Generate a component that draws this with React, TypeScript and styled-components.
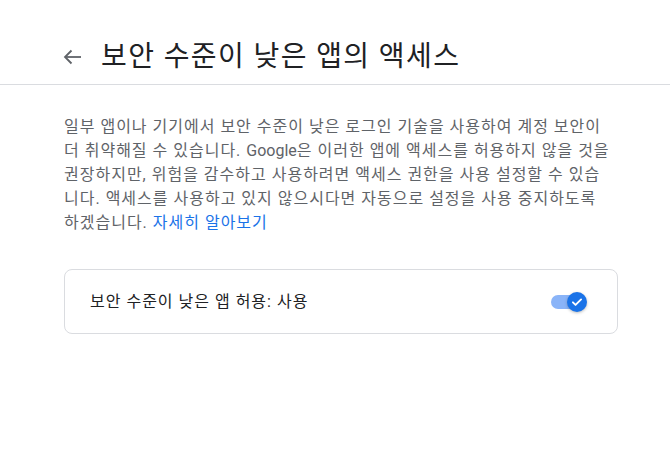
import React from "react";
import styled, { createGlobalStyle } from "styled-components";

const Global = createGlobalStyle`
  html, body { margin: 0; padding: 0; background: #fff; }
  body { font-family: Roboto, "Noto Sans CJK KR", sans-serif; }
`;

const Page = styled.div`
  width: 670px;
  min-height: 449px;
  background: #fff;
`;

const Header = styled.header`
  height: 85px;
  box-sizing: border-box;
  border-bottom: 1px solid #dadce0;
  display: flex;
  align-items: center;
  padding: 29px 0 0 61px;
  gap: 16px;
`;

const BackButton = styled.button`
  width: 24px;
  height: 24px;
  padding: 0;
  border: none;
  background: none;
  display: flex;
  align-items: center;
  justify-content: center;
`;

const Title = styled.h1`
  margin: 0;
  font-size: 28px;
  font-weight: 400;
  letter-spacing: 1.4px;
  color: #202124;
  line-height: 36px;
`;

const Content = styled.main`
  padding: 30px 0 0 64px;
  width: 554px;
`;

const Description = styled.p`
  margin: 0;
  width: 548px;
  font-size: 16px;
  line-height: 24px;
  letter-spacing: 1px;
  color: #5f6368;
`;

const Latin = styled.span`
  letter-spacing: 0;
`;

const Link = styled.a`
  color: #1a73e8;
  text-decoration: none;
`;

const Card = styled.section`
  margin-top: 34px;
  height: 65px;
  box-sizing: border-box;
  border: 1px solid #dadce0;
  border-radius: 8px;
  display: flex;
  align-items: center;
  justify-content: space-between;
  padding: 0 32px 0 25px;
`;

const CardLabel = styled.span`
  font-size: 16px;
  letter-spacing: 1px;
  color: #202124;
  line-height: 24px;
`;

const Toggle = styled.div`
  position: relative;
  width: 34px;
  height: 14px;
  border-radius: 7px;
  background: #8ab4f8;
`;

const Knob = styled.div`
  position: absolute;
  right: -2px;
  top: -3px;
  width: 20px;
  height: 20px;
  border-radius: 50%;
  background: #1a73e8;
  box-shadow: 0 1px 3px rgba(60, 64, 67, 0.35);
  display: flex;
  align-items: center;
  justify-content: center;
`;

export default function App() {
  return (
    <Page>
      <Global />
      <Header>
        <BackButton aria-label="뒤로">
          <svg width="24" height="24" viewBox="0 0 24 24">
            <path d="M20 12H5" stroke="#5f6368" strokeWidth="1.8" fill="none" />
            <path d="M10.5 5.5L4 12l6.5 6.5" stroke="#5f6368" strokeWidth="1.8" fill="none" />
          </svg>
        </BackButton>
        <Title>보안 수준이 낮은 앱의 액세스</Title>
      </Header>
      <Content>
        <Description>
          일부 앱이나 기기에서 보안 수준이 낮은 로그인 기술을 사용하여 계정 보안이 더 취약해질 수 있습니다. <Latin>Google</Latin>은 이러한 앱에 액세스를 허용하지 않을 것을 권장하지만, 위험을 감수하고 사용하려면 액세스 권한을 사용 설정할 수 있습니다. 액세스를 사용하고 있지 않으시다면 자동으로 설정을 사용 중지하도록 하겠습니다.{" "}
          <Link href="#">자세히 알아보기</Link>
        </Description>
        <Card>
          <CardLabel>보안 수준이 낮은 앱 허용: 사용</CardLabel>
          <Toggle>
            <Knob>
              <svg width="14" height="14" viewBox="0 0 24 24">
                <path d="M5 12.5l4.5 4.5L19 7.5" stroke="#fff" strokeWidth="3.2" fill="none" strokeLinecap="round" strokeLinejoin="round" />
              </svg>
            </Knob>
          </Toggle>
        </Card>
      </Content>
    </Page>
  );
}
